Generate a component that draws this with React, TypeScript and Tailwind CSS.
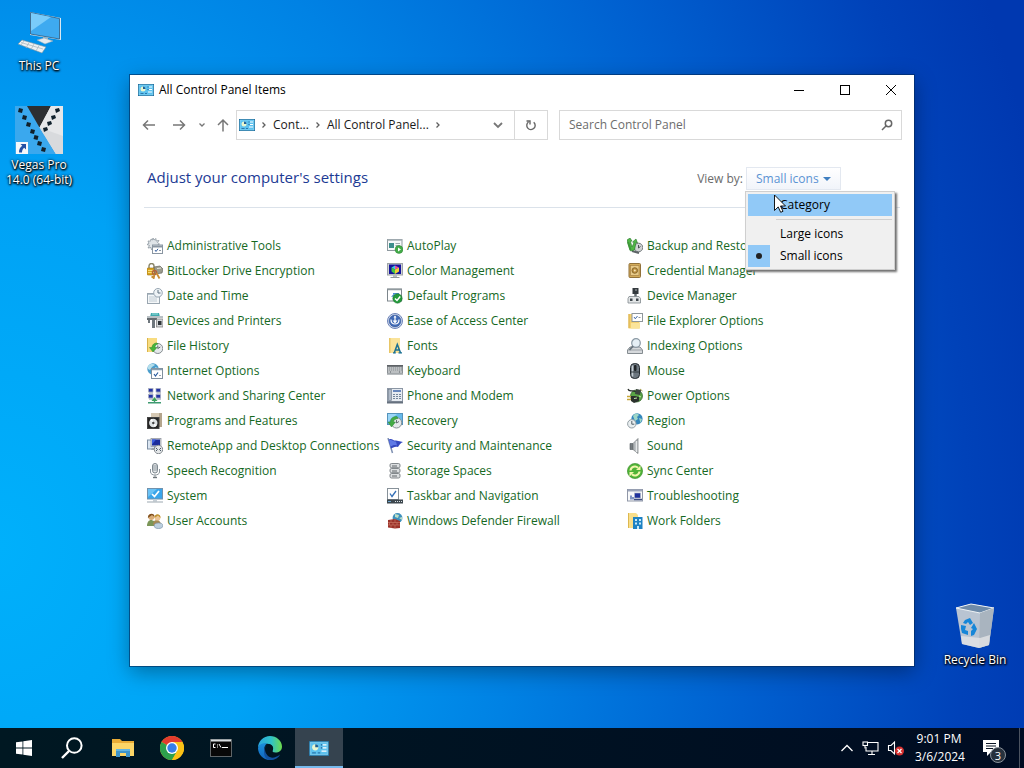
import React, { useState } from 'react';

const icons: Record<string, React.ReactNode> = {
  admin: (
    <>
      <path d="M6 0l1 2 2-1.5 0 2.5 3-.5-1.5 2 2 1.5-2 1 1 2-2.500 0-.5 2.500-2-1.500-2 2-.5-2.500-3 .5 1.500-2.500L0 6.500l2-1.200L1 3l2.500.2L4 1l1.500 1z" fill="#dfe4e8" stroke="#8d979f" strokeWidth=".8" />
      <rect x="5.500" y="7" width="10" height="8.500" fill="#fff" stroke="#8a96a2" />
      <path d="M5.500 8.500h10" stroke="#8a96a2" strokeWidth="2" />
      <path d="M8 12l1 1.500 2-2.700" fill="none" stroke="#3a62a0" />
      <path d="M12 12.500h2" stroke="#8a96a2" />
    </>
  ),
  bitlocker: (
    <>
      <path d="M2 6V3a2.500 2.500 0 0 1 5 0v3" fill="none" stroke="#8a8668" strokeWidth="1.400" />
      <rect x="0" y="5" width="8" height="7" rx="1" fill="#d9a520" stroke="#9c6d10" strokeWidth=".6" />
      <path d="M1 7.500h6M1 9.500h6" stroke="#f6dc78" />
      <path d="M7 4l6-1 3 3-1 4-7 1z" fill="#9b9b8d" stroke="#66665e" strokeWidth=".7" />
      <path d="M10 5.500l4-.5" stroke="#e8e8df" />
      <circle cx="7.500" cy="9.500" r="2" fill="none" stroke="#b5623c" strokeWidth="1.500" />
      <path d="M7.500 11.500L6.500 16M9.500 10l3 5.500M6.500 14h-2" stroke="#c98d35" strokeWidth="1.800" />
    </>
  ),
  date: (
    <>
      <rect x=".5" y="5.500" width="12" height="10" fill="#f4f7f9" stroke="#9aa6b0" />
      <path d="M2.500 9h8M2.500 11h8M2.500 13h8" stroke="#8a9cac" strokeDasharray="1 1" />
      <path d="M1 6.500h9" stroke="#b7c4ce" />
      <circle cx="11" cy="4.800" r="4.300" fill="#eef3f6" stroke="#97a5b1" />
      <path d="M11 2v3h2.500" fill="none" stroke="#5d6f7e" />
    </>
  ),
  devices: (
    <>
      <path d="M4 0h8l1 4H3z" fill="#3fa9ad" />
      <path d="M5 1h6" stroke="#9de0dd" />
      <path d="M0 3h16v2H0z" fill="#b9c0c4" />
      <path d="M0 5h10v2H0z" fill="#646b70" />
      <path d="M1 7h2v3H1zM5 7h3v8H5z" fill="#6f777d" />
      <rect x="9.500" y="6" width="6.500" height="8" fill="#d2d5d7" stroke="#777" strokeWidth=".7" />
      <rect x="11" y="8" width="3.500" height="4" fill="#30363a" />
    </>
  ),
  fileHistory: (
    <>
      <path d="M0 0h10v14H0z" fill="#f8dc80" />
      <path d="M.5 0v14" stroke="#d9b34c" />
      <circle cx="10.800" cy="10.500" r="5" fill="#e5e9eb" stroke="#858c90" />
      <path d="M10.800 7.500v3l2.500-1.500" fill="none" stroke="#5c6469" />
      <path d="M10 5C6 5 5 8 5 9.500H2.500L6 14l4-4.500H8C8 8 8.500 6.500 11 6z" fill="#46b43a" stroke="#2c862a" strokeWidth=".5" />
    </>
  ),
  internet: (
    <>
      <circle cx="6" cy="6" r="5.700" fill="#4a9dcc" />
      <path d="M1 3.500C3 0 7 1 8 2L5 4 3 7 1 6zM8 4l3 1-2 3z" fill="#b4dfec" />
      <rect x="4.500" y="5.500" width="11" height="10" fill="#fff" stroke="#80909e" />
      <path d="M5 6.500h10" stroke="#8ba0b1" strokeWidth="1.500" />
      <path d="M7 11l1.500 2L11 9.500" fill="none" stroke="#285b9e" strokeWidth="1.200" />
      <path d="M12 12.500h2" stroke="#9aa6b0" />
    </>
  ),
  network: (
    <>
      <g fill="#2434a4" stroke="#a8aec0" strokeWidth=".7">
        <rect x="1.500" y=".5" width="4.500" height="3.500" />
        <rect x="9" y=".5" width="4.500" height="3.500" />
        <rect x="1.500" y="6.500" width="4.500" height="3.500" />
        <rect x="9" y="6.500" width="4.500" height="3.500" />
      </g>
      <path d="M2 5h4M9.500 5H14M2 11h4M9.500 11H14" stroke="#8b93a3" />
      <path d="M7.500 9l3 4h-6z" fill="#3ba556" />
      <path d="M7.500 12v3M1 14.800h13" stroke="#3f9a71" strokeWidth="1.400" />
    </>
  ),
  programs: (
    <>
      <path d="M4 0h11v14H4z" fill="#d6c9b4" />
      <path d="M12 0h3v14h-3z" fill="#b4a58d" />
      <rect x=".5" y="4.500" width="11.500" height="11" fill="#252525" stroke="#444" />
      <circle cx="6.300" cy="10" r="4.200" fill="#dfe3e5" />
      <path d="M6.300 10L3 7l2-1.200zM6.300 10l3.500 2.500-2 1.500z" fill="#fff" />
      <circle cx="6.300" cy="10" r="1.200" fill="#444" />
    </>
  ),
  remote: (
    <>
      <rect x=".5" y="2" width="7" height="9" fill="#dbe6f2" stroke="#7e8fa3" />
      <rect x="4" y=".5" width="10" height="8" fill="#d3d7dc" stroke="#8a8f97" strokeWidth=".7" />
      <rect x="5" y="1.500" width="8" height="6" fill="#1b2c9c" />
      <path d="M5 1.500h4l-4 5z" fill="#3a5de0" />
      <path d="M5 10h5v2H4z" fill="#9aa2ab" />
      <circle cx="11.500" cy="11.500" r="4.200" fill="#e3e6e8" stroke="#868c91" />
      <path d="M9 10l1.500 1.500L9 13M14 10l-1.500 1.500L14 13" fill="none" stroke="#4b5966" />
    </>
  ),
  speech: (
    <>
      <rect x="5.500" y=".5" width="5" height="9.500" rx="2.500" fill="#e7eaec" stroke="#7b858c" />
      <path d="M5.500 3h5M5.500 5h5M5.500 7h5" stroke="#8b959c" />
      <path d="M3.500 6v3c0 4 9 4 9 0V6M8 12v2" fill="none" stroke="#8b959c" />
      <path d="M6 14.500h4" stroke="#6e767c" strokeWidth="1.400" />
    </>
  ),
  system: (
    <>
      <rect x=".5" y=".5" width="15" height="10.500" fill="#3aa5ea" stroke="#7192ad" />
      <path d="M1 1h9L1 9z" fill="#6bc2f5" />
      <path d="M5 6l2.500 2.500L12 3" fill="none" stroke="#fff" strokeWidth="1.700" />
      <path d="M6 11.500h4v2H6z" fill="#c6ced5" />
      <path d="M0 14h16" stroke="#9ba7b0" />
    </>
  ),
  users: (
    <>
      <path d="M0 13c0-4 2-6 4-6s5 2 5 6z" fill="#7b9658" />
      <circle cx="4.300" cy="4" r="3" fill="#d9ad78" />
      <path d="M1 5C0 0 8-1 7.500 4L5 2z" fill="#80501f" />
      <path d="M6 12c0-4 2-5 4-5s4 2 4 5z" fill="#a78a54" />
      <circle cx="10.500" cy="4.700" r="2.900" fill="#edc697" />
      <path d="M7.500 5C7 0 14 0 13.500 5L11 2.500z" fill="#bd912d" />
      <ellipse cx="11.500" cy="12.700" rx="4.300" ry="2.800" fill="#bccfdf" stroke="#7b94aa" strokeWidth=".7" />
    </>
  ),
  autoplay: (
    <>
      <rect x=".5" y="1.500" width="14.500" height="11" fill="#f7f9fa" stroke="#8e999f" />
      <path d="M.5 2h14.500" stroke="#a4afb5" strokeWidth="1.500" />
      <rect x="2" y="5" width="5" height="5" fill="#3d8e8c" />
      <path d="M8.500 5.500H13M8.500 7.500H13" stroke="#9fabb1" />
      <circle cx="12" cy="11.500" r="3.900" fill="#44ac49" stroke="#2d8434" strokeWidth=".5" />
      <path d="M11 9.500v4l3-2z" fill="#fff" />
    </>
  ),
  color: (
    <>
      <rect x=".5" y=".5" width="15" height="11.500" fill="#cfd2d4" stroke="#9ea4a8" />
      <rect x="2" y="1.500" width="12" height="9.500" fill="#15159c" />
      <path d="M8 2.500L4.500 4.500 8 6.500z" fill="#40cbe4" />
      <path d="M8 2.500l4 2-4 2z" fill="#eb4ea1" />
      <path d="M4.500 4.500l3.500 2V11L4.500 8.500z" fill="#44c542" />
      <path d="M12 4.500v4L8 11V6.500z" fill="#f0d138" />
      <path d="M6 12h4v2H6z" fill="#b6bbbf" />
      <path d="M3.500 14.500h9" stroke="#8f969a" />
    </>
  ),
  defaults: (
    <>
      <rect x=".5" y="1" width="14" height="12" fill="#fff" stroke="#7d868c" />
      <path d="M.5 1.500h14" stroke="#919a9f" strokeWidth="1.500" />
      <path d="M4 9l3-3.500L9 8" fill="#4c8dd0" />
      <path d="M6 5.500h6" stroke="#4c8dd0" />
      <circle cx="10.500" cy="10.500" r="4.700" fill="#239a3b" stroke="#176c29" strokeWidth=".5" />
      <path d="M8 10.500l2 2 3.200-4" fill="none" stroke="#fff" strokeWidth="1.500" />
    </>
  ),
  ease: (
    <>
      <circle cx="8" cy="8" r="7.500" fill="#d4dff0" stroke="#6d83b8" />
      <circle cx="8" cy="8" r="5.900" fill="#416bb7" stroke="#345496" strokeWidth=".6" />
      <path d="M8 3.500v5.500M4 6.500c0 3 1.500 4.500 4 4.500s4-1.500 4-4.500" fill="none" stroke="#fff" strokeWidth="1.200" />
      <path d="M5.500 7.500L8 10.500l2.500-3z" fill="#fff" />
      <path d="M8 2.500l1.500 2h-3z" fill="#fff" />
    </>
  ),
  fonts: (
    <>
      <path d="M2 0h11v15H2z" fill="#fae39a" />
      <path d="M2 0h1.500v15H2z" fill="#e8c666" />
      <path d="M6 14.800h2.800M11.500 14.800h3.500" stroke="#1d7193" strokeWidth="1.200" />
      <path d="M7.200 15L10.300 6.500 13.600 15M8.500 12h4" fill="none" stroke="#1d7193" strokeWidth="1.500" />
    </>
  ),
  keyboard: (
    <>
      <rect x="0" y="2" width="16" height="10" fill="#8b9094" />
      <rect x="0" y="2" width="16" height="1.500" fill="#5d6165" />
      <path d="M1 5h14M1 7h14" stroke="#eceeef" strokeDasharray="1.500 .5" />
      <path d="M1 9h2M4 9h8M13 9h2" stroke="#eceeef" />
      <rect x="0" y="10.500" width="16" height="1.500" fill="#b9bdc0" />
    </>
  ),
  phone: (
    <>
      <rect x=".5" y=".5" width="15" height="13" fill="#e6ebf1" stroke="#8b96a4" />
      <rect x="1.500" y="1.500" width="3" height="11" fill="#aeb9c7" stroke="#687585" strokeWidth=".6" />
      <path d="M6 3h8" stroke="#476db0" strokeWidth="1.600" />
      <path d="M6 6.500h8M6 8.500h8M6 10.500h8" stroke="#74869b" strokeDasharray="2 1" />
      <path d="M0 14.500h16" stroke="#66717e" strokeWidth="2" />
    </>
  ),
  recovery: (
    <>
      <rect x=".5" y=".5" width="15" height="11" fill="#65b9ea" stroke="#5593bb" />
      <path d="M1 1h9L1 9z" fill="#9bd6f7" />
      <circle cx="9.500" cy="9.800" r="5.200" fill="#e4e8ea" stroke="#879095" />
      <path d="M9.500 7v3l2.500-1.500" fill="none" stroke="#667076" />
      <path d="M10 3.500C5 3.500 3.500 6 3.500 9H1l3.500 5L8.500 9H6.500C6.500 7 8 6 11 5.500z" fill="#43ab44" stroke="#2e8838" strokeWidth=".5" />
    </>
  ),
  flag: (
    <>
      <path d="M1 0l4.500 15" stroke="#7f91b2" strokeWidth="1.500" />
      <path d="M1.500 1.500C5-.5 6 3 9 2.500L16 4c-3 1-3.500 3-5 5-3-1-5 .5-7 1.500z" fill="#3549c0" />
      <path d="M2 2.500c3-1.500 4 1.500 7 1l1 4c-3-1-4 0-6.500 1z" fill="#5f7ae6" />
    </>
  ),
  storage: (
    <g fill="#dcdfe1" stroke="#767c80" strokeWidth=".9">
      <rect x="3" y=".5" width="10" height="4.200" rx="1.500" />
      <rect x="3" y="5.500" width="10" height="4.200" rx="1.500" />
      <rect x="3" y="10.500" width="10" height="4.500" rx="1.500" />
      <path d="M5 3h5M5 8h5M5 13h5" stroke="#53595d" />
    </g>
  ),
  taskbar: (
    <>
      <rect x=".5" y=".5" width="11" height="11" fill="#fff" stroke="#879199" />
      <path d="M3 5.500l2 3 4-5.500" fill="none" stroke="#346fb6" strokeWidth="1.300" />
      <rect x="0" y="11.500" width="16" height="4" fill="#3d474e" />
      <path d="M8 13.500h7" stroke="#d8dfe4" strokeDasharray="1 1" />
      <path d="M1 13.500h3" stroke="#6fa6cf" />
    </>
  ),
  firewall: (
    <>
      <circle cx="10.500" cy="5" r="4.900" fill="#3e90bd" />
      <path d="M8 1l4 1-1 3-3-1zM12 5l3-1v3z" fill="#bbdfc6" />
      <path d="M1 7l7-1 5 2v7l-5 .5-7-1z" fill="#9b322a" />
      <path d="M1 9.500h12M1 12h12M4 7v2.500M8 6v3.500M2.500 9.500V12M6 9.500V12M10 9.500V12M4 12v3M8 12v3.500" stroke="#cf7c6a" strokeWidth=".6" />
    </>
  ),
  backup: (
    <>
      <circle cx="11.500" cy="9.500" r="4.300" fill="#cfd3d4" stroke="#73797b" />
      <path d="M11.500 7v3l2-1.500" fill="none" stroke="#485053" />
      <path d="M5 13l7 2" stroke="#5d6467" strokeWidth="2" />
      <path d="M0 2l3-2 2 3-1.500.5L5 9 7 4.500 5.500 4 9 1l1.500 4-1.500-.5L7.500 12l-4 1z" fill="#51b847" stroke="#27762a" strokeWidth=".6" />
      <path d="M1 4l2.500 8" stroke="#3e9839" strokeWidth="2" />
    </>
  ),
  credential: (
    <>
      <rect x="2" y=".5" width="11.500" height="14" rx="1" fill="#d2ab59" stroke="#91713a" />
      <rect x="3.500" y="2.500" width="8.500" height="10" fill="#e7ca88" stroke="#a98445" strokeWidth=".7" />
      <circle cx="7.800" cy="7.500" r="2.800" fill="#bd9242" stroke="#7b5a22" strokeWidth=".8" />
      <circle cx="7.800" cy="7.500" r="1" fill="#f7e5bb" />
    </>
  ),
  device: (
    <>
      <rect x="5.500" y="0" width="6" height="6" fill="#343a3e" />
      <path d="M8 2h2" stroke="#a8afb3" />
      <path d="M8.500 6v4" stroke="#697074" strokeWidth="2.500" />
      <path d="M2 8.500h10l1.500 2v4.500H1v-4.500z" fill="#e2e5e6" stroke="#81898d" strokeWidth=".8" />
      <path d="M3 10.500h2.500V13H3zM9 10.500h2.500V13H9z" fill="#41494e" />
    </>
  ),
  explorer: (
    <>
      <path d="M1.500 1h11v14.500h-11z" fill="#f4d06f" />
      <path d="M2 1v14" stroke="#d8ae48" />
      <rect x="5" y=".5" width="10.500" height="8" fill="#fff" stroke="#8e969b" />
      <path d="M7 4l1.300 1.800L10.500 3" fill="none" stroke="#456caa" />
      <path d="M11.500 4.500h2" stroke="#8e969b" />
      <path d="M4 10h9v5.500H4z" fill="#fbe49a" />
    </>
  ),
  indexing: (
    <>
      <path d="M3 9h10l2.500 3v3.500H.5V12z" fill="#d6d9dc" stroke="#858c91" />
      <path d="M1 12h14" stroke="#9ba2a7" />
      <circle cx="9" cy="5" r="4.300" fill="#e2edf4" fillOpacity=".9" stroke="#8a98a3" strokeWidth="1.200" />
      <path d="M6 8.200L2.500 12" stroke="#68747d" strokeWidth="1.800" />
    </>
  ),
  mouse: (
    <>
      <rect x="3.500" y=".5" width="9" height="15" rx="4" fill="#6d7780" stroke="#242a2f" />
      <path d="M5.500 2.500v11" stroke="#c4ccd2" strokeWidth="1.500" />
      <rect x="7" y="2" width="2.500" height="6" rx="1" fill="#202427" />
      <path d="M4 9h8" stroke="#353c41" />
    </>
  ),
  power: (
    <>
      <circle cx="9.500" cy="8" r="6" fill="#5aa545" stroke="#285c22" strokeWidth=".7" />
      <path d="M1 1c1 4 5 0 8 3" fill="none" stroke="#252b27" strokeWidth="1.200" />
      <path d="M9 1l5 1-1 5-5-1z" fill="#3b453d" />
      <path d="M13 1l2.500 2" stroke="#a89e4e" />
      <path d="M4 8h4l4 1v4l-5 2-3-2z" fill="#2a302c" />
      <path d="M0 8.500h4M0 11.500h4" stroke="#c5a638" strokeWidth="1.500" />
      <path d="M12 8l2 1M7 10.500l3-.5" stroke="#c5e8a9" />
    </>
  ),
  region: (
    <>
      <circle cx="10" cy="5.800" r="5.600" fill="#3487bd" />
      <path d="M6 3c3-4 5-2 6-1l-2 2 1 2-3 2zM12 5l3 1-1.500 4z" fill="#9ed6c7" />
      <circle cx="4.800" cy="10.800" r="4.200" fill="#e9eef0" stroke="#929da3" />
      <path d="M4.800 8v3.200h2.500" fill="none" stroke="#526069" />
    </>
  ),
  sound: (
    <>
      <path d="M3 5.500h3v6H3z" fill="#777d81" stroke="#545a5e" strokeWidth=".6" />
      <path d="M6 5.500L11 .5v15l-5-4z" fill="#b1b6b9" stroke="#72787b" strokeWidth=".7" />
      <path d="M9.500 3v11" stroke="#e8eaeb" strokeWidth="1.500" />
    </>
  ),
  sync: (
    <>
      <circle cx="8" cy="8" r="7.600" fill="#50b338" stroke="#368a25" strokeWidth=".6" />
      <path d="M3.500 7.500A4.500 4.500 0 0 1 11 4.700M12.500 8.500A4.500 4.500 0 0 1 5 11.300" fill="none" stroke="#f3f6ad" strokeWidth="2.100" />
      <path d="M9 7h4.500V2.500zM7 9H2.500v4.500z" fill="#f3f6ad" />
    </>
  ),
  trouble: (
    <>
      <rect x=".5" y="1.500" width="15" height="11.500" fill="#f8f9fa" stroke="#9097a8" />
      <path d="M1 2.500h14" stroke="#9ca5bb" strokeWidth="2" />
      <rect x="7.500" y="5" width="6" height="5" fill="#1f319c" stroke="#b2bac8" strokeWidth=".6" />
      <path d="M4 7.500v4M6 9v2.500" stroke="#5671af" strokeWidth="1.500" />
      <path d="M7 11.500h8" stroke="#3d4d82" strokeWidth="1.500" />
    </>
  ),
  work: (
    <>
      <path d="M1 0h8l2 2v13H1z" fill="#f9df8b" />
      <path d="M1.500 0v15" stroke="#ddb84f" />
      <rect x="6" y="4" width="9.500" height="12" fill="#1e82c4" />
      <path d="M8 6h2v2H8zM12 6h2v2h-2zM8 9.500h2v2H8zM12 9.500h2v2h-2zM10 13h2v3h-2z" fill="#c7eafb" />
    </>
  ),
};

const items: { name: string; icon: string }[] = [
  { name: 'Administrative Tools', icon: 'admin' },
  { name: 'AutoPlay', icon: 'autoplay' },
  { name: 'Backup and Restore', icon: 'backup' },
  { name: 'BitLocker Drive Encryption', icon: 'bitlocker' },
  { name: 'Color Management', icon: 'color' },
  { name: 'Credential Manager', icon: 'credential' },
  { name: 'Date and Time', icon: 'date' },
  { name: 'Default Programs', icon: 'defaults' },
  { name: 'Device Manager', icon: 'device' },
  { name: 'Devices and Printers', icon: 'devices' },
  { name: 'Ease of Access Center', icon: 'ease' },
  { name: 'File Explorer Options', icon: 'explorer' },
  { name: 'File History', icon: 'fileHistory' },
  { name: 'Fonts', icon: 'fonts' },
  { name: 'Indexing Options', icon: 'indexing' },
  { name: 'Internet Options', icon: 'internet' },
  { name: 'Keyboard', icon: 'keyboard' },
  { name: 'Mouse', icon: 'mouse' },
  { name: 'Network and Sharing Center', icon: 'network' },
  { name: 'Phone and Modem', icon: 'phone' },
  { name: 'Power Options', icon: 'power' },
  { name: 'Programs and Features', icon: 'programs' },
  { name: 'Recovery', icon: 'recovery' },
  { name: 'Region', icon: 'region' },
  { name: 'RemoteApp and Desktop Connections', icon: 'remote' },
  { name: 'Security and Maintenance', icon: 'flag' },
  { name: 'Sound', icon: 'sound' },
  { name: 'Speech Recognition', icon: 'speech' },
  { name: 'Storage Spaces', icon: 'storage' },
  { name: 'Sync Center', icon: 'sync' },
  { name: 'System', icon: 'system' },
  { name: 'Taskbar and Navigation', icon: 'taskbar' },
  { name: 'Troubleshooting', icon: 'trouble' },
  { name: 'User Accounts', icon: 'users' },
  { name: 'Windows Defender Firewall', icon: 'firewall' },
  { name: 'Work Folders', icon: 'work' },
];

const PanelIcon: React.FC<{ className: string }> = ({ className }) => (
  <svg viewBox="0 0 16 12" className={className}>
    <rect x=".5" y=".5" width="15" height="11" fill="#5cc1ee" stroke="#22709f" />
    <path d="M1 1h14v10H1z" fill="none" stroke="#9fe0fa" strokeWidth=".5" />
    <circle cx="5" cy="5" r="2.500" fill="#e9f6cf" />
    <path d="M5 5V2.500A2.500 2.500 0 0 1 7.500 5z" fill="#1f5f96" />
    <path d="M2.500 9.500h3M7 9.500h2" stroke="#2b78ad" />
    <path d="M9.500 3h1M9.500 5.500h1" stroke="#1f5f96" />
    <path d="M11 3h3M11 5.500h3M10 8h4" stroke="#fff" />
  </svg>
);

const Chevron: React.FC = () => (
  <svg viewBox="0 0 8 8" className="size-2 shrink-0" fill="none" stroke="#5f5f5f" strokeWidth="1.300">
    <path d="M2.500 1.500L5 4 2.500 6.500" />
  </svg>
);

const DesktopIcon: React.FC<{ label: string; children: React.ReactNode }> = ({ label, children }) => (
  <button className="flex w-[76px] flex-col items-center gap-[3px] text-xs leading-[15px] text-white [text-shadow:0_1px_2px_#000,1px_1px_2px_#000,0_0_3px_#000]">
    {children}
    <span>{label}</span>
  </button>
);

const ViewMenu: React.FC = () => {
  const [open, setOpen] = useState(true);
  const [view, setView] = useState('Small icons');

  const choose = (value: string) => {
    setView(value);
    setOpen(false);
  };

  return (
    <div className="relative">
      <button
        aria-haspopup="menu"
        aria-expanded={open}
        onClick={() => setOpen(!open)}
        className="flex h-[23px] w-[95px] items-center gap-1 border border-[#e3e8f0] bg-linear-to-b from-white to-[#f1f4fa] pl-[9px] text-[#5b93d3]"
      >
        {view}
        <svg viewBox="0 0 8 4" className="h-1 w-2" fill="#3f7fc0">
          <path d="M0 0h8L4 4z" />
        </svg>
      </button>
      {open && (
        <div
          role="menu"
          className="absolute top-6 -left-px z-10 flex w-[150px] flex-col border border-[#cfcfcf] bg-[#f0f0f0] p-0.5 text-black shadow-[2px_2px_2px_#707070]"
        >
          <button role="menuitemradio" aria-checked="false" onClick={() => choose('Category')} className="h-[22px] bg-[#91c9f7] pl-8 text-left">
            Category
          </button>
          <div role="separator" className="my-[3px] ml-7 h-px bg-[#d0d0d0]" />
          <button role="menuitemradio" aria-checked="false" onClick={() => choose('Large icons')} className="h-[22px] pl-8 text-left">
            Large icons
          </button>
          <button role="menuitemradio" aria-checked="true" onClick={() => choose('Small icons')} className="flex h-[22px] items-center gap-2.5 text-left">
            <span className="flex size-[22px] items-center justify-center bg-[#91c9f7]">
              <span className="size-1.5 rounded-full bg-[#222]" />
            </span>
            Small icons
          </button>
        </div>
      )}
    </div>
  );
};

const ControlPanel: React.FC = () => (
  <section className="absolute top-[75px] right-[110px] bottom-[62px] left-[130px] flex flex-col bg-white shadow-[0_0_0_1px_rgba(0,40,90,0.6),0_6px_20px_rgba(0,0,0,0.35)]">
    {/* Title bar */}
    <header className="flex h-[30px] items-center pl-2 text-black">
      <PanelIcon className="h-3 w-4" />
      <h1 className="flex-1 pl-[5px]">All Control Panel Items</h1>
      <button aria-label="Minimize" className="flex h-full w-[46px] items-center justify-center">
        <svg viewBox="0 0 10 10" className="size-2.5"><path d="M0 5.500h10" stroke="#000" /></svg>
      </button>
      <button aria-label="Maximize" className="flex h-full w-[46px] items-center justify-center">
        <svg viewBox="0 0 10 10" className="size-2.5"><rect x=".5" y=".5" width="9" height="9" fill="none" stroke="#000" /></svg>
      </button>
      <button aria-label="Close" className="flex h-full w-[46px] items-center justify-center">
        <svg viewBox="0 0 10 10" className="size-2.5"><path d="M0 0l10 10M10 0L0 10" stroke="#000" /></svg>
      </button>
    </header>

    {/* Navigation */}
    <nav className="mt-[5px] flex h-[30px] items-center pr-3 pl-3">
      <button aria-label="Back" className="mr-4">
        <svg viewBox="0 0 14 12" className="h-3 w-3.5" fill="none" stroke="#777" strokeWidth="1.500"><path d="M13 6H1.500M6 1.500L1.500 6 6 10.500" /></svg>
      </button>
      <button aria-label="Forward" className="mr-3">
        <svg viewBox="0 0 14 12" className="h-3 w-3.5" fill="none" stroke="#777" strokeWidth="1.500"><path d="M1 6h11.500M8 1.500L12.500 6 8 10.500" /></svg>
      </button>
      <button aria-label="Recent locations" className="mr-[11px]">
        <svg viewBox="0 0 8 8" className="size-2" fill="none" stroke="#777" strokeWidth="1.300"><path d="M1.500 2.500L4 5l2.500-2.500" /></svg>
      </button>
      <button aria-label="Up" className="mr-[7px]">
        <svg viewBox="0 0 12 14" className="h-3.5 w-3" fill="none" stroke="#777" strokeWidth="1.500"><path d="M6 13.500V2M1 7l5-5 5 5" /></svg>
      </button>
      <div className="mr-[11px] flex h-full min-w-0 flex-1 items-center border border-[#d9d9d9]">
        <PanelIcon className="ml-0.5 h-3 w-4 shrink-0" />
        <div className="flex flex-1 items-center gap-[5px] pl-[5px] text-[#1a1a1a]">
          <Chevron />
          <button>Cont...</button>
          <Chevron />
          <button>All Control Panel...</button>
          <Chevron />
        </div>
        <button aria-label="Previous locations" className="flex h-full w-8 items-center justify-center">
          <svg viewBox="0 0 10 8" className="h-2 w-2.5" fill="none" stroke="#777" strokeWidth="1.800"><path d="M1 2l4 4 4-4" /></svg>
        </button>
        <button aria-label="Refresh" className="flex h-full w-[33px] items-center justify-center border-l border-[#d9d9d9]">
          <svg viewBox="0 0 12 12" className="size-3" fill="none" stroke="#666" strokeWidth="1.400">
            <path d="M3.500 3A4.200 4.200 0 1 0 8.700 3.200M1.500 2h3.500v3.500" />
          </svg>
        </button>
      </div>
      <label className="flex h-full w-[343px] items-center border border-[#d9d9d9] pr-2 pl-[9px]">
        <input type="search" aria-label="Search Control Panel" placeholder="Search Control Panel" className="min-w-0 flex-1 outline-none placeholder:text-[#6d6d6d]" />
        <svg viewBox="0 0 12 12" className="size-3" fill="none" stroke="#666" strokeWidth="1.500">
          <circle cx="7.500" cy="4.500" r="3.200" />
          <path d="M5.200 6.800L1 11" />
        </svg>
      </label>
    </nav>

    {/* Heading and view switch */}
    <div className="mx-[14px] mt-[27px] flex h-[41px] items-start border-b border-[#dbe2ea] pl-[3px]">
      <h2 className="flex-1 text-[15px] leading-[21px] text-[#1c3a94]">Adjust your computer's settings</h2>
      <div className="mr-[59px] flex items-center gap-[3px] text-[#6b6b6b]">
        <span>View by:</span>
        <ViewMenu />
      </div>
    </div>

    {/* Items */}
    <ul className="mt-[25px] grid grid-cols-[repeat(auto-fill,240px)] pl-[17px]">
      {items.map((item) => (
        <li key={item.name} className="flex h-[25px] items-center">
          <a href="#" className="flex items-center gap-1 whitespace-nowrap text-[#16691f]">
            <svg viewBox="0 0 16 16" className="size-4 shrink-0">{icons[item.icon]}</svg>
            {item.name}
          </a>
        </li>
      ))}
    </ul>
  </section>
);

const Taskbar: React.FC = () => (
  <footer className="flex h-10 shrink-0 items-center bg-linear-to-r from-[#001822] to-[#000c22] text-white">
    <button aria-label="Start" className="flex h-full w-12 items-center justify-center">
      <svg viewBox="0 0 16 16" className="size-4" fill="#fff">
        <path d="M0 2.300l6.500-.9v6.200H0zM7.300 1.300L16 0v7.600H7.300zM0 8.400h6.500v6.200L0 13.700zM7.300 8.400H16V16l-8.700-1.200z" />
      </svg>
    </button>
    <button aria-label="Search" className="mr-[3px] flex h-full w-12 items-center justify-center">
      <svg viewBox="0 0 22 22" className="size-[22px]" fill="none" stroke="#fff" strokeWidth="2">
        <circle cx="13.300" cy="8.500" r="7.300" />
        <path d="M8 14l-7 7" strokeWidth="2.400" />
      </svg>
    </button>
    <div className="flex h-full gap-px">
      <button aria-label="File Explorer" className="flex w-12 items-center justify-center">
        <svg viewBox="0 0 22 18" className="h-[18px] w-[22px]">
          <path d="M0 0h8l2 2h12v15H0z" fill="#e9ac36" />
          <path d="M0 4h22v13H0z" fill="#fcd667" />
          <path d="M4 10h14v8h-4v-4H8v4H4z" fill="#3e94c9" />
          <path d="M4 10h14v2H4z" fill="#62b5e2" />
        </svg>
      </button>
      <button aria-label="Google Chrome" className="flex w-12 items-center justify-center">
        <svg viewBox="0 0 24 24" className="size-6">
          <circle cx="12" cy="12" r="12" fill="#fbc116" />
          <path d="M12 12L1.600 6A12 12 0 0 1 22.400 6z" fill="#e33b2e" />
          <path d="M12 12L1.600 6A12 12 0 0 0 12 24l5.200-9z" fill="#2da14c" />
          <path d="M12 6h10.400A12 12 0 0 1 12 24l5.200-9z" fill="#fbc116" />
          <circle cx="12" cy="12" r="6" fill="#fff" />
          <circle cx="12" cy="12" r="4.700" fill="#367ee9" />
        </svg>
      </button>
      <button aria-label="Command Prompt" className="flex w-12 items-center justify-center">
        <svg viewBox="0 0 22 18" className="h-[18px] w-[22px]">
          <rect x=".5" y=".5" width="21" height="17" fill="#080808" stroke="#5f6568" />
          <path d="M1 1.500h20" stroke="#d9dee1" strokeWidth="2" />
          <path d="M5.500 5H3.500v3.500h2M7.500 5.500v1M7.500 7.500v1M9 5l2 3.500M12 8.500h6" fill="none" stroke="#fff" />
        </svg>
      </button>
      <button aria-label="Microsoft Edge" className="flex w-12 items-center justify-center">
        <svg viewBox="0 0 24 24" className="size-6">
          <defs>
            <linearGradient id="edgeTop" x1="0" x2="1"><stop offset="0" stopColor="#2aa5df" /><stop offset=".55" stopColor="#2fc2c8" /><stop offset="1" stopColor="#6edb4c" /></linearGradient>
            <linearGradient id="edgeLow" x2="0" y2="1"><stop offset="0" stopColor="#1b8fdb" /><stop offset="1" stopColor="#1165bd" /></linearGradient>
          </defs>
          <path d="M0 12C0 5 5.500 0 12 0s12 5 12 10.500c0 4-3 6-6.500 6-2.500 0-3.700-1-3-2 1.500-2 .5-6-3.500-6.500C5 7 1 9 0 12z" fill="url(#edgeTop)" />
          <path d="M0 12C1 8 5 6.500 9 7.500c-3 2-4 7-1 11 2.500 3.500 7 4.500 10 4C8 27 0 20 0 12z" fill="url(#edgeLow)" />
          <path d="M9 8c-3 3-2.500 8 .5 11.500 3 3 7.500 3 12.500-1-1 3-5 5.500-10 5.500C5 24 4.500 12 9 8z" fill="#12519f" />
          <path d="M11.500 8.500c-3 3-1.500 9 4.500 10 2.500.4 4.500-.2 6-.9-3.500 1-8 .5-7.500-3.100 1.500-2 0-5-3-6z" fill="#03141f" />
        </svg>
      </button>
      <button aria-label="Control Panel" className="flex w-12 items-center justify-center border-b-2 border-[#76b9ed] bg-[#35434f] pt-0.5">
        <PanelIcon className="h-[15px] w-5" />
      </button>
    </div>

    <div className="ml-auto flex h-full items-center">
      <button aria-label="Show hidden icons" className="mr-2">
        <svg viewBox="0 0 14 8" className="h-2 w-3.5" fill="none" stroke="#fff" strokeWidth="1.300"><path d="M1.500 7L7 1.500 12.500 7" /></svg>
      </button>
      <button aria-label="Network" className="mr-2">
        <svg viewBox="0 0 17 14" className="h-3.5 w-[17px]" fill="none" stroke="#fff" strokeWidth="1.100">
          <path d="M5 1.500h11v8.500H4V6M10 10v3M6 13.500h7" />
          <rect x="1" y="1" width="4.500" height="3.500" />
          <path d="M3 4.500v3" />
        </svg>
      </button>
      <button aria-label="Volume, no audio device" className="mr-2.5">
        <svg viewBox="0 0 18 16" className="h-4 w-[18px]">
          <path d="M1.500 5.500h2.500L7.500 2v12L4 10.500H1.500z" fill="none" stroke="#fff" strokeWidth="1.100" />
          <circle cx="12.500" cy="11" r="4.500" fill="#d5302f" />
          <path d="M10.500 9l4 4M14.500 9l-4 4" stroke="#fff" strokeWidth="1.200" />
        </svg>
      </button>
      <button className="mr-[19px] w-12 text-center leading-[18px]">
        <span className="block">9:01 PM</span>
        <span className="block">3/6/2024</span>
      </button>
      <button aria-label="Notifications" className="relative mr-[19px]">
        <svg viewBox="0 0 18 18" className="size-[18px]">
          <path d="M1 1h16v12H9l-4 4v-4H1z" fill="#fff" />
          <path d="M4 4.500h10M4 7h10M4 9.500h7" stroke="#0b1626" />
        </svg>
        <span className="absolute top-2 left-2 flex size-4 items-center justify-center rounded-full border border-[#8a929b] bg-[#27313d] text-[11px] leading-none">3</span>
      </button>
      <button aria-label="Show desktop" className="h-full w-[5px] border-l border-[#4b5360]" />
    </div>
  </footer>
);

export default function App() {
  return (
    <div className="flex h-screen flex-col overflow-hidden font-['Open_Sans','Noto_Sans',sans-serif] text-xs">
      <main className="relative flex-1 bg-[radial-gradient(105%_190%_at_0%_75%,#00b0fb_0%,#00a2f5_25%,#0082e4_48%,#0060d0_70%,#0042b9_90%,#0038b0_100%)]">
        <div className="absolute top-[9px] left-[1px] flex flex-col gap-[33px]">
          <DesktopIcon label="This PC">
            <svg viewBox="0 0 48 46" className="h-[46px] w-12">
              <path d="M15 3l31 6v22l-31-5z" fill="#d8e8f2" />
              <path d="M15.500 3.500l29 6v20.500l-29-5z" fill="#3eaaf0" stroke="#2b587c" strokeWidth=".8" />
              <path d="M16 4l20 4-20 14z" fill="#7accfa" />
              <path d="M28 28l5 1v4l-5-1z" fill="#a8b9c4" />
              <path d="M22 31l7-2 9 3-8 3z" fill="#e5ebef" stroke="#91a5b2" strokeWidth=".5" />
              <path d="M7 31l24 7-4 6L3 35z" fill="#edf1f3" stroke="#78909f" strokeWidth=".6" />
              <path d="M6 33.500l22 6.500M9 32l-3 4M14 33.500l-3 5.500M19 35l-3 5.500M24 36.500l-3 5.500" stroke="#acb9c1" strokeWidth=".8" />
            </svg>
          </DesktopIcon>
          <DesktopIcon label="Vegas Pro 14.0 (64-bit)">
            <svg viewBox="0 0 48 48" className="size-12">
              <rect width="48" height="48" fill="#dfe1e3" />
              <path d="M0 0h13l28 48H0z" fill="#3aa8ee" />
              <path d="M12 0h24L24.500 21.500z" fill="#2c2e31" />
              <path d="M36 0h12v48h-7L24.500 21.500z" fill="#e6e7e9" />
              <path d="M24.500 21.500L48 30v18h-7z" fill="#cfd2d5" fillOpacity=".6" />
              <g fill="#10202c">
                <path d="M4 2l4 1-1 4-4-1zM8 9l4 1-1 4-4-1zM12 16l4 1-1 4-4-1zM16 23l4 1-1 4-4-1zM19.500 29l4 1-1 4-4-1zM23 35l4 1-1 4-4-1zM27 41l4 1-1 4-4-1z" />
                <path d="M40 3l4-1 1 3-4 2zM36 10l4-1 1 3-4 2zM32 16l4-1 1 3-4 2zM28 22l4-1 1 3-4 2z" />
              </g>
              <rect x="1" y="36" width="12" height="12" fill="#f6f8fa" />
              <path d="M5.500 38H11v5.500l-1.800-1.800C7.500 43 7 44.500 7 46.500H4C4 43 5 41.500 7.300 39.800z" fill="#2451a4" />
            </svg>
          </DesktopIcon>
        </div>
        <div className="absolute right-[11px] bottom-[61px]">
          <DesktopIcon label="Recycle Bin">
            <svg viewBox="0 0 40 46" className="h-[46px] w-10">
              <path d="M1 5l15-4 23 4-5 37-10 3L7 41z" fill="#c3cbd3" fillOpacity=".95" />
              <path d="M1 5l15-4 23 4-14 5z" fill="#6e8ba9" stroke="#eef2f5" />
              <path d="M25 10l14-5-5 37-10 3z" fill="#a9b4bf" />
              <path d="M6 33l19 2 10-3-1 10-10 3-17-4z" fill="#e2e4e6" fillOpacity=".8" />
              <g fill="#1686d8">
                <path d="M10 17l5-2 3 5-3 2-2-3-2 2-3-1z" />
                <path d="M6 22l5 1-1 4 3 1v4l-6-2-1-4z" />
                <path d="M19 20l3 6-3 6-3 1v-5l2-2-2-1z" />
              </g>
            </svg>
          </DesktopIcon>
        </div>
        <ControlPanel />
        {/* Mouse pointer */}
        <svg viewBox="0 0 12 19" className="pointer-events-none absolute top-[194px] left-[774px] z-20 h-[19px] w-3">
          <path d="M.5 1v15.500l3.700-3.600 2.500 5.400 2.300-1-2.500-5.300h5z" fill="#fff" stroke="#000" strokeWidth=".9" />
        </svg>
      </main>
      <Taskbar />
    </div>
  );
}
